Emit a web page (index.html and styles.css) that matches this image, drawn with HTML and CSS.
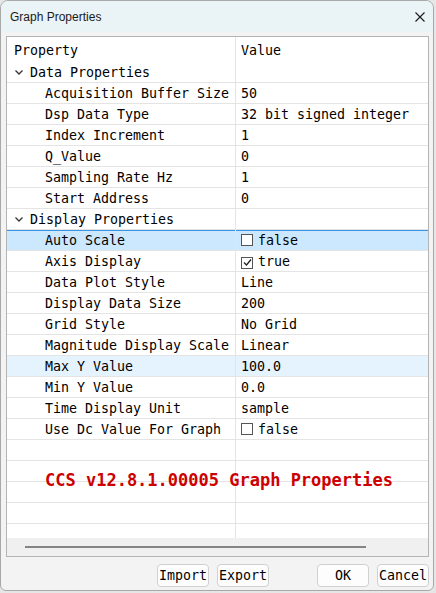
FILE: index.html
```html
<!DOCTYPE html>
<html>
<head>
    <title>Graph Properties</title>
    <link rel="stylesheet" href="styles.css">
</head>
<body>

<div class="window">
    <div class="titlebar">
        <span class="title">Graph Properties</span>
        <svg class="close" width="10" height="10" viewBox="0 0 10 10">
            <path d="M0.5 0.5 L9.5 9.5 M9.5 0.5 L0.5 9.5" stroke="#1a1a1a" stroke-width="1.1" fill="none"/>
        </svg>
    </div>

    <div class="panel">
        <div class="grid">
            <div class="row header">
                <div class="name">Property</div>
                <div class="value">Value</div>
            </div>

            <div class="row">
                <div class="name cat"><svg class="chev" width="8" height="5" viewBox="0 0 8 5"><path d="M0.5 0.5 L4 4 L7.5 0.5" stroke="#333" stroke-width="1.3" fill="none"/></svg>Data Properties</div>
                <div class="value"></div>
            </div>
            <div class="row"><div class="name prop">Acquisition Buffer Size</div><div class="value">50</div></div>
            <div class="row"><div class="name prop">Dsp Data Type</div><div class="value">32 bit signed integer</div></div>
            <div class="row"><div class="name prop">Index Increment</div><div class="value">1</div></div>
            <div class="row"><div class="name prop">Q_Value</div><div class="value">0</div></div>
            <div class="row"><div class="name prop">Sampling Rate Hz</div><div class="value">1</div></div>
            <div class="row"><div class="name prop">Start Address</div><div class="value">0</div></div>

            <div class="row">
                <div class="name cat"><svg class="chev" width="8" height="5" viewBox="0 0 8 5"><path d="M0.5 0.5 L4 4 L7.5 0.5" stroke="#333" stroke-width="1.3" fill="none"/></svg>Display Properties</div>
                <div class="value"></div>
            </div>
            <div class="row selected"><div class="name prop">Auto Scale</div><div class="value"><span class="check"></span>false</div></div>
            <div class="row">
                <div class="name prop">Axis Display</div>
                <div class="value"><span class="check"><svg width="9" height="9" viewBox="0 0 9 9"><path d="M1 4.5 L3.5 7 L8 1.5" stroke="#222" stroke-width="1.3" fill="none"/></svg></span>true</div>
            </div>
            <div class="row"><div class="name prop">Data Plot Style</div><div class="value">Line</div></div>
            <div class="row"><div class="name prop">Display Data Size</div><div class="value">200</div></div>
            <div class="row"><div class="name prop">Grid Style</div><div class="value">No Grid</div></div>
            <div class="row"><div class="name prop">Magnitude Display Scale</div><div class="value">Linear</div></div>
            <div class="row hover"><div class="name prop">Max Y Value</div><div class="value">100.0</div></div>
            <div class="row"><div class="name prop">Min Y Value</div><div class="value">0.0</div></div>
            <div class="row"><div class="name prop">Time Display Unit</div><div class="value">sample</div></div>
            <div class="row"><div class="name prop">Use Dc Value For Graph</div><div class="value"><span class="check"></span>false</div></div>

            <div class="row"><div class="name"></div><div class="value"></div></div>
            <div class="row"><div class="name"></div><div class="value"></div></div>
            <div class="row"><div class="name"></div><div class="value"></div></div>
            <div class="row"><div class="name"></div><div class="value"></div></div>
            <div class="row"><div class="name"></div><div class="value"></div></div>

            <div class="banner">CCS v12.8.1.00005 Graph Properties</div>
        </div>
        <div class="hscroll">
            <div class="thumb"></div>
        </div>
    </div>

    <div class="buttons">
        <button class="btn">Import</button>
        <button class="btn">Export</button>
        <button class="btn gap">OK</button>
        <button class="btn">Cancel</button>
    </div>
</div>

</body>
</html>
```

FILE: styles.css
```css
body {
    margin: 0;
    padding: 0;
    background-color: #e6e6e6;
    font-family: "DejaVu Sans Mono", "Liberation Mono", monospace;
    font-size: 13.3px;
    color: #000;
}

.window {
    width: 432px;
    height: 589px;
    background-color: #f3f3f3;
    border: 1px solid #a8a8a8;
    border-radius: 8px 8px 6px 6px;
    overflow: hidden;
}

.titlebar {
    height: 31px;
    background-color: #eaf3f6;
    display: flex;
    align-items: center;
    justify-content: space-between;
    padding: 0 8px 0 9px;
}

.title {
    font-family: "Liberation Sans", Arial, sans-serif;
    font-size: 12px;
    color: #1a1a1a;
}

.close {
    display: block;
}

.panel {
    width: 421px;
    margin: 4px 0 0 5px;
    background-color: #fff;
    border: 1px solid #b4b4b4;
}

.grid {
    position: relative;
    height: 501px;
    overflow: hidden;
}

.row {
    display: flex;
    height: 20px;
    line-height: 22px;
    border-bottom: 1px solid #e4e4e4;
    white-space: nowrap;
}

.row.header {
    height: 25px;
    line-height: 27px;
    border-bottom: none;
}

.name {
    width: 228px;
    border-right: 1px solid #e4e4e4;
}

.header .name {
    padding-left: 7px;
    width: 221px;
}

.name.cat {
    padding-left: 8px;
    width: 220px;
}

.chev {
    margin-right: 7px;
    vertical-align: 2px;
}

.name.prop {
    padding-left: 38px;
    width: 190px;
}

.value {
    padding-left: 5px;
}

.selected {
    background-color: #cce8ff;
    box-shadow: inset 0 1px 0 #3b94df;
}

.hover {
    background-color: #e5f3ff;
}

.check {
    display: inline-flex;
    align-items: center;
    justify-content: center;
    box-sizing: border-box;
    width: 12px;
    height: 12px;
    border: 1px solid #555;
    background-color: #fff;
    margin-right: 5px;
    vertical-align: -1px;
}

.banner {
    position: absolute;
    left: 38px;
    top: 433px;
    font-size: 17px;
    font-weight: bold;
    color: #cc0000;
    white-space: nowrap;
}

.hscroll {
    height: 18px;
    background-color: #f0f0f0;
    position: relative;
}

.thumb {
    position: absolute;
    left: 18px;
    top: 8px;
    width: 341px;
    height: 2px;
    background-color: #858585;
}

.buttons {
    display: flex;
    justify-content: flex-end;
    gap: 8px;
    padding: 7px 4px 0 0;
}

.btn {
    width: 52px;
    height: 23px;
    padding: 0;
    background-color: #fdfdfd;
    border: 1px solid #d0d0d0;
    border-radius: 4px;
    font-family: "DejaVu Sans Mono", "Liberation Mono", monospace;
    font-size: 13.3px;
    color: #000;
}

.btn.gap {
    margin-left: 40px;
}
```
